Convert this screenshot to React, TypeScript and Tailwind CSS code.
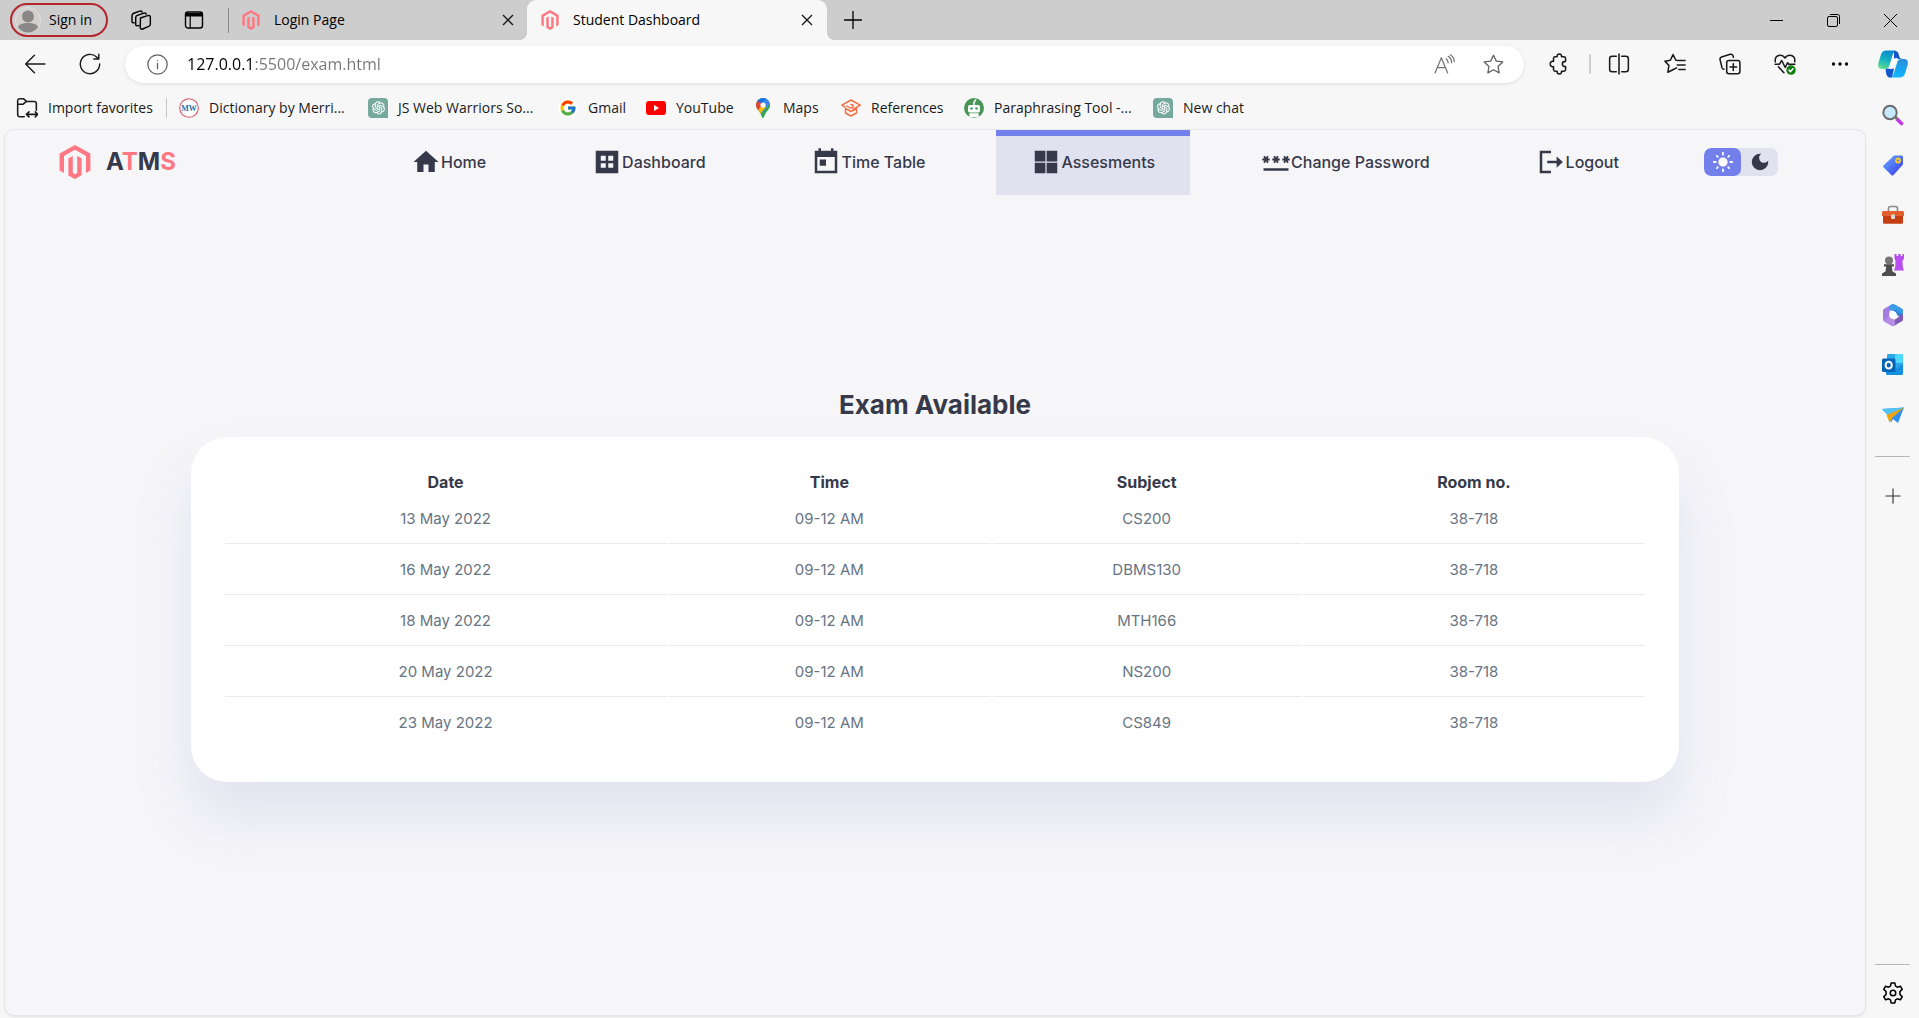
import { useState, type ReactNode } from "react";
import { FcGoogle } from "react-icons/fc";
import { AiOutlineOpenAI } from "react-icons/ai";
import { MdLightMode, MdDarkMode } from "react-icons/md";

function Stroke({ children, className = "size-5", width = 1.4 }: { children: ReactNode; className?: string; width?: number }) {
  return (
    <svg viewBox="0 0 20 20" fill="none" stroke="currentColor" strokeWidth={width} strokeLinecap="round" strokeLinejoin="round" className={`shrink-0 ${className}`} aria-hidden="true">
      {children}
    </svg>
  );
}

function Magento({ className }: { className: string }) {
  return (
    <svg viewBox="1.2 0 21.6 24" fill="#ff7782" className={`shrink-0 ${className}`} preserveAspectRatio="none" aria-hidden="true">
      <path d="M12 0 1.608 6v12l2.97 1.715-.013-12L11.99 3.43l7.42 4.285v12L22.39 18V6zM13.484 19.714 12 20.577l-1.49-.855V7.72L7.54 9.436l.005 12.01L12 24l4.456-2.574V9.43l-2.972-1.716z" />
    </svg>
  );
}

function Close() {
  return (
    <svg viewBox="0 0 12 12" stroke="#1a1a1a" strokeWidth="1.4" className="size-3" aria-hidden="true">
      <path d="M1 1l10 10M11 1L1 11" />
    </svg>
  );
}

const starPath = "M10 1.2l2.7 5.6 6.1.8-4.5 4.3 1.1 6.1L10 15l-5.4 3 1.1-6.1L1.2 7.6l6.1-.8z";

function TabStrip() {
  return (
    <div className="flex h-10 items-center bg-[#cdcdcd] text-sm text-black">
      <button className="ml-[10px] flex h-[34px] w-[98px] items-center gap-2 rounded-full border-2 border-[#b3262e] pl-[3px]">
        <svg viewBox="0 0 26 26" className="size-[26px]" aria-hidden="true">
          <circle cx="13" cy="13" r="12.5" fill="#d2d0ce" stroke="#e3e1df" />
          <circle cx="13" cy="9.6" r="6" fill="#8a8886" />
          <path d="M3 20c1-3 5-4 10-4s9 1 10 4c-2 3.500-6 5.500-10 5.500S5 23.500 3 20z" fill="#8a8886" />
        </svg>
        Sign in
      </button>
      <button aria-label="Workspaces" className="ml-[22px]">
        <Stroke className="size-[22px]" width={1.3}>
          <path d="M9.500 8.200l6.500-2.200c1.500-.5 2.500.2 2.500 1.600v6.200c0 1-.5 1.700-1.500 2l-5.500 2.400c-1.200.5-2.200-.2-2.200-1.400z" />
          <path d="M8 15l-1.200.3c-1 .2-1.600-.4-1.600-1.300V7.800c0-1 .5-1.700 1.500-2l6-2c1-.3 1.800 0 2 .9" />
          <path d="M3.800 12.500c-1.300.3-2-.2-2-1.300V6.300c0-1.200.5-2 1.600-2.400l5.400-2c1-.4 2 0 2.200.9" />
        </Stroke>
      </button>
      <button aria-label="Tab actions" className="ml-8">
        <Stroke className="size-5">
          <rect x="1.500" y="2" width="17" height="16" rx="2.500" />
          <path d="M2 3.500h16v2.500H2zM6.200 6v12" fill="currentColor" strokeWidth="1.200" />
        </Stroke>
      </button>
      <span className="ml-6 h-[25px] w-px bg-[#8a8a8a]" />
      <div className="flex w-[298px] items-center pl-[13px]">
        <Magento className="h-5 w-[18px]" />
        <span className="ml-3.5 flex-1">Login Page</span>
        <button aria-label="Close Login Page" className="mr-[13px]"><Close /></button>
      </div>
      <div className="relative flex h-10 w-[300px] items-center rounded-t-[9px] bg-[#f7f7f7] pl-3.5">
        <span className="absolute bottom-0 -left-2 size-2 bg-[radial-gradient(circle_at_0_0,#cdcdcd_8px,#f7f7f7_8px)]" />
        <span className="absolute -right-2 bottom-0 size-2 bg-[radial-gradient(circle_at_100%_0,#cdcdcd_8px,#f7f7f7_8px)]" />
        <Magento className="h-5 w-[18px]" />
        <span className="ml-3.5 flex-1">Student Dashboard</span>
        <button aria-label="Close Student Dashboard" className="mr-[14px]"><Close /></button>
      </div>
      <button aria-label="New tab" className="ml-4">
        <Stroke className="size-5" width={1.3}><path d="M10 1.500v17M1.500 10h17" /></Stroke>
      </button>
      <div className="ml-auto flex items-center gap-11 pr-[22px]">
        <button aria-label="Minimize">
          <svg viewBox="0 0 13 13" className="size-[13px]" stroke="#000"><path d="M0 6.500h13" /></svg>
        </button>
        <button aria-label="Restore">
          <svg viewBox="0 0 13 13" className="size-[13px]" stroke="#000" fill="none">
            <rect x=".5" y="2.500" width="10" height="10" rx="1.500" />
            <path d="M3 .5h7.500a2 2 0 0 1 2 2V10" />
          </svg>
        </button>
        <button aria-label="Close window">
          <svg viewBox="0 0 13 13" className="size-[13px]" stroke="#000"><path d="M0 0l13 13M13 0L0 13" /></svg>
        </button>
      </div>
    </div>
  );
}

function Copilot() {
  return (
    <svg viewBox="0 0 30 28" className="h-7 w-[30px]" aria-hidden="true">
      <defs>
        <linearGradient id="cpa" x1=".6" y1="0" x2=".3" y2="1"><stop offset="0" stopColor="#0b86cf" /><stop offset=".55" stopColor="#18b5c0" /><stop offset="1" stopColor="#62dd8e" /></linearGradient>
        <linearGradient id="cpb" x1=".6" y1="0" x2=".3" y2="1"><stop offset="0" stopColor="#2a8fd8" /><stop offset=".5" stopColor="#16a5f0" /><stop offset="1" stopColor="#17b9fb" /></linearGradient>
      </defs>
      <path d="M16 1c4 0 4.500 2 5 4.500.4 2.500 1.500 3.500 4 3.500h-9zM7.500 18.500H16l-2 9h-1.500c-3 0-4-2-4.500-5-.2-1.500-.5-2.500-.5-4z" fill="#1457cc" />
      <path d="M8.500.5h9.500c-2.300 1-3 3-4 6.500l-2.500 8c-1 3.300-2 4-5 4H4c-3.500 0-4.500-2.600-3.600-6L3 4.500C3.800 2 5.500.5 8.500.5z" fill="url(#cpa)" />
      <path d="M21.500 27.500h-9c2.300-1 3-3 4-6.500l2.500-8c1-3.300 2-4 5-4h2c3.500 0 4.500 2.600 3.600 6L27 23.500c-.8 2.500-2.500 4-5.500 4z" fill="url(#cpb)" />
      <path d="M18.500 8c-2.500 0-3.500 1-4.200 3.200L13 15.500c-.8 2.500-1.800 3.500-3.500 3.500h2.500c2.500 0 3.600-1 4.300-3.200l1.200-3.800c.7-2.300 1.300-3.400 3-4z" fill="#fff" />
    </svg>
  );
}

function Toolbar() {
  return (
    <div className="flex h-12 items-center text-[#1a1a1a]">
      <button aria-label="Back" className="ml-6">
        <Stroke className="size-[22px]" width={1.3}><path d="M19 10H1.500M9.500 2l-8 8 8 8" /></Stroke>
      </button>
      <button aria-label="Refresh" className="ml-[33px]">
        <Stroke className="size-[22px]" width={1.3}><path d="M18.800 10a8.800 8.800 0 1 1-2.800-6.400l1.500 1.500M18 1v4.500h-4.500" /></Stroke>
      </button>
      <div className="ml-6 flex h-[37px] flex-1 items-center rounded-full bg-white pl-[22px] shadow-[0_1px_4px_rgba(0,0,0,0.1)]">
        <button aria-label="Site information" className="text-[#606060]">
          <Stroke className="size-[21px]" width={1.2}><circle cx="10" cy="10" r="9.200" /><path d="M10 9v5M10 6.200v.1" /></Stroke>
        </button>
        <input
          aria-label="Address"
          defaultValue="127.0.0.1:5500/exam.html"
          className="ml-[19px] min-w-0 flex-1 bg-[linear-gradient(90deg,#000_67px,#767676_67px)] bg-clip-text text-base text-transparent caret-black outline-none"
        />
        <button aria-label="Read aloud" className="text-[#767676]">
          <Stroke className="size-[21px]" width={1.2}><path d="M1 18L7 3.500l6 14.500M3 13h8M11.500 4.500c1.500 1 2 2.500 1.900 4M13.500 2.200c2.500 1.600 3.400 3.700 3.200 6M15.500.8c2.700 1.800 3.800 3.800 3.800 6.400" /></Stroke>
        </button>
        <button aria-label="Add to favorites" className="mr-5 ml-7 text-[#606060]">
          <Stroke className="size-[21px]" width={1.2}><path d={starPath} /></Stroke>
        </button>
      </div>
      <div className="ml-6 flex items-center">
        <button aria-label="Extensions">
          <Stroke className="size-[22px]"><path d="M6.500 3.500h1.800c-.3-1.500.6-2.500 2-2.500s2.300 1 2 2.500h2.200c1 0 1.500.5 1.500 1.500v2.600c-2 0-3 1-3 2.400s1 2.400 3 2.400V15c0 1-.5 1.500-1.500 1.500h-2.200c.3 1.500-.6 2.500-2 2.500s-2.300-1-2-2.500H6.500c-1 0-1.500-.5-1.500-1.500v-2.600c-2 .4-3-.8-3-2.400s1-2.800 3-2.400V5c0-1 .5-1.500 1.500-1.500z" /></Stroke>
        </button>
        <span className="ml-[19px] h-5 w-[2px] bg-[#d0d0d0]" />
        <button aria-label="Split screen" className="ml-[17px]">
          <Stroke className="size-[22px]"><path d="M7.500 3H3.700C2.500 3 1.500 4 1.500 5.200v9.600C1.500 16 2.500 17 3.700 17h3.800M12.500 3h3.800c1.200 0 2.200 1 2.200 2.200v9.600c0 1.200-1 2.200-2.200 2.200h-3.800M10 1v18" /></Stroke>
        </button>
        <button aria-label="Favorites" className="ml-[34px]">
          <Stroke className="size-[22px]"><path d="M13 6.800l-2.200-.2L8.200 1.500 5.800 6.600.8 7.400l3.700 3.900-1 6.200 5-2.500M13 6.800h6.200M12 11h7.200M13.500 15h5.700M8.500 15l3-1.500" /></Stroke>
        </button>
        <button aria-label="Collections" className="ml-[33px]">
          <Stroke className="size-[22px]"><rect x="7" y="6.800" width="12" height="12" rx="2" /><path d="M13 9.800v6M10 12.800h6M4.500 14.800c-1 0-1.500-.6-1.800-1.500L1 6.200C.7 5 1.200 4 2.400 3.600l7.800-2.400c1.200-.3 2.200.3 2.500 1.300l.4 1.300" /></Stroke>
        </button>
        <button aria-label="Browser essentials" className="ml-[33px]">
          <Stroke className="size-[22px]">
            <path d="M1.200 8C.6 4.500 2.500 2 5.500 2 7.500 2 9 3 10 4.500 11 3 12.500 2 14.500 2c3 0 4.900 2.500 4.300 6M1 10.200h4l2-3.400 3.200 6.400 2.200-4.400 1 1.400H19M4 12.500l5 5.500" />
            <circle cx="15.500" cy="15.500" r="4.300" fill="#107c10" stroke="none" />
            <path d="M13.700 15.600l1.300 1.300 2.300-2.600" stroke="#fff" />
          </Stroke>
        </button>
        <button aria-label="Settings and more" className="ml-[34px]">
          <svg viewBox="0 0 20 20" className="size-5" aria-hidden="true"><circle cx="3.500" cy="10" r="1.700" /><circle cx="10" cy="10" r="1.700" /><circle cx="16.500" cy="10" r="1.700" /></svg>
        </button>
        <button aria-label="Copilot" className="mr-[11px] ml-7"><Copilot /></button>
      </div>
    </div>
  );
}

function GptMark() {
  return (
    <span className="flex size-5 items-center justify-center rounded-[4px] rounded-br-none bg-[#75a99c]">
      <AiOutlineOpenAI className="size-[17px] text-white" />
    </span>
  );
}

const bookmarks: { label: string; width: string; icon: ReactNode }[] = [
  {
    label: "Dictionary by Merri...",
    width: "w-[189px]",
    icon: (
      <svg viewBox="0 0 20 20" className="size-5" aria-hidden="true">
        <circle cx="10" cy="10" r="9.300" fill="#fff" stroke="#e0575f" strokeWidth="1.100" />
        <text x="10" y="12.800" textAnchor="middle" fontSize="8" fontWeight="700" fill="#2f6ea5" fontFamily="Liberation Serif">MW</text>
      </svg>
    ),
  },
  { label: "JS Web Warriors So...", width: "w-[190px]", icon: <GptMark /> },
  {
    label: "Gmail",
    width: "w-[88px]",
    icon: <span className="flex size-5 items-center justify-center rounded-full bg-white"><FcGoogle className="size-[18px]" /></span>,
  },
  {
    label: "YouTube",
    width: "w-[107px]",
    icon: (
      <svg viewBox="0 0 20 20" className="size-5" aria-hidden="true"><rect y="3" width="20" height="14" rx="3" fill="red" /><path d="M8 7l5 3-5 3z" fill="#fff" /></svg>
    ),
  },
  {
    label: "Maps",
    width: "w-[88px]",
    icon: (
      <svg viewBox="0 0 20 20" className="size-5" aria-hidden="true">
        <defs><clipPath id="pin"><path d="M10 0a7 7 0 0 1 7 7c0 4.500-4.500 6-6.200 12.300-.3.9-1.300.9-1.600 0C7.500 13 3 11.500 3 7a7 7 0 0 1 7-7z" /></clipPath></defs>
        <g clipPath="url(#pin)">
          <path d="M0 0h20v20H0z" fill="#34a853" />
          <path d="M3 13.500L14 0h6v5.500L8 19z" fill="#4285f4" />
          <path d="M2 14L10 4l3 5-7 8z" fill="#fbbc04" />
          <path d="M2 10V2l3 0 5 4.500-6.500 7z" fill="#ea4335" />
          <path d="M4.500 0H14l-5 6-5-3.800z" fill="#1a73e8" />
          <path d="M17.500 4.500L7.500 16.500 10 20l8-8z" fill="#34a853" />
        </g>
        <circle cx="10" cy="7" r="2.600" fill="#fff" />
      </svg>
    ),
  },
  {
    label: "References",
    width: "w-[123px]",
    icon: (
      <svg viewBox="0 0 20 20" className="size-5" fill="none" stroke="#f36f45" strokeWidth="1.500" strokeLinejoin="round" strokeLinecap="round" aria-hidden="true">
        <path d="M4 9L.8 7.200 10 2l9.200 5.200L12 11.300M10 6.500c3 0 3 4-1 3.500L6 8M4.500 11v4L10 18l5.500-3v-4.500L10 13.500 4.500 10.500" />
      </svg>
    ),
  },
  {
    label: "Paraphrasing Tool -...",
    width: "w-[189px]",
    icon: (
      <svg viewBox="0 0 20 20" className="size-5" aria-hidden="true">
        <circle cx="10" cy="10" r="10" fill="#499557" />
        <rect x="4" y="7" width="12" height="7.500" rx="1.800" fill="#fff" />
        <path d="M10 7V4l2-2.500M6 16h8v2.500H6z" stroke="#fff" strokeWidth="1.300" fill="#fff" />
        <circle cx="7.500" cy="10.500" r="1.200" fill="#499557" /><circle cx="12.500" cy="10.500" r="1.200" fill="#499557" />
      </svg>
    ),
  },
  { label: "New chat", width: "w-[120px]", icon: <GptMark /> },
];

function Bookmarks() {
  return (
    <div className="flex h-[41px] items-center pb-0.5 text-sm whitespace-nowrap text-[#1a1a1a]">
      <button className="ml-4 flex w-[150px] items-center gap-2.5">
        <Stroke className="size-[22px]" width={1.4}>
          <path d="M7.500 18H3.500c-1.200 0-2-.8-2-2V3.500c0-1.200.8-2 2-2h3.200L9.500 4h7c1.200 0 2 .8 2 2v6M1.500 6.500h5L9.500 4M10 15.800h9.500M11.800 13.500l-2.300 2.300 2.300 2.300M17.500 13.500l2.300 2.300-2.300 2.300" />
        </Stroke>
        Import favorites
      </button>
      <span className="mr-3 h-5 w-px bg-[#c8c8c8]" />
      {bookmarks.map((b) => (
        <a key={b.label} href="#" className={`flex shrink-0 items-center gap-2.5 ${b.width}`}>
          {b.icon}
          {b.label}
        </a>
      ))}
    </div>
  );
}

const navItems = [
  { label: "Home", path: "M10 20v-6h4v6h5v-8h3L12 3 2 12h3v8z" },
  { label: "Dashboard", path: "M3 3v18h18V3H3zm8 13.500H7V13h4zm0-5.500H7V7h4zm6 5.500h-4V13h4zm0-5.500h-4V7h4z" },
  { label: "Time Table", path: "M21 3h-3V1h-2v2H8V1H6v2H3v18h18zm-2 16H5V8h14zM7 10h5v5H7z" },
  { label: "Assesments", path: "M3 3v8.500h8.500V3H3zm0 18h8.500v-8.500H3zM12.500 3v8.500H21V3zm0 18H21v-8.500h-8.500z" },
  {
    label: "Change Password",
    path: "M2 17h20v2H2zm1.150-4.050L4 11.470l.85 1.480 1.300-.75-.85-1.480H7v-1.500H5.300l.85-1.470L4.850 7 4 8.470 3.150 7l-1.300.75.85 1.470H1v1.500h1.700l-.85 1.480zm6.700-.75l1.300.75.850-1.480.85 1.480 1.300-.75-.85-1.480H15v-1.500h-1.700l.85-1.470-1.300-.75L12 8.470 11.150 7l-1.300.75.85 1.470H9v1.500h1.700zM23 9.220h-1.700l.85-1.470-1.300-.75L20 8.470 19.150 7l-1.300.75.85 1.470H17v1.500h1.700l-.85 1.480 1.300.75.85-1.480.85 1.480 1.300-.75-.85-1.480H23z",
  },
  { label: "Logout", path: "M3 3h9v2H5v14h7v2H3zm13.500 4.500L21.500 12l-5 4.500V13H9v-2h7.500z" },
];

function ThemeToggle() {
  const [dark, setDark] = useState(false);
  return (
    <button
      aria-label="Toggle theme"
      aria-pressed={dark}
      onClick={() => setDark(!dark)}
      className="mb-0.5 flex h-7 w-[74px] shrink-0 overflow-hidden rounded-[7px] bg-[#e1e2f0] text-[#363949]"
    >
      <span className={`flex flex-1 items-center justify-center rounded-[7px] ${dark ? "" : "bg-[#7380ec] text-white"}`}>
        <MdLightMode className="size-[22px]" />
      </span>
      <span className={`flex flex-1 items-center justify-center rounded-[7px] ${dark ? "bg-[#7380ec] text-white" : ""}`}>
        <MdDarkMode className="size-[22px]" />
      </span>
    </button>
  );
}

function Header() {
  return (
    <header className="flex h-[65px] items-center pr-[87px] pl-[54px]">
      <a href="#" className="flex w-[317px] shrink-0 items-center gap-[15px] pb-0.5">
        <Magento className="h-[34px] w-8" />
        <h2 className="text-2xl font-bold">
          A<span className="text-[#ff7782]">T</span>M<span className="text-[#ff7782]">S</span>
        </h2>
      </a>
      <nav className="mr-[50px] flex h-full flex-1 items-stretch justify-between">
        {navItems.map((item) => {
          const active = item.label === "Assesments";
          return (
            <a
              key={item.label}
              href="#"
              className={`flex items-center px-[35px] pb-0.5 text-base font-medium whitespace-nowrap ${active ? "relative bg-[#e1e2f0]" : ""}`}
            >
              {active && <span className="absolute inset-x-0 top-0 h-1.5 bg-[#7380ec]" />}
              <svg viewBox="0 0 24 24" fill="currentColor" fillRule="evenodd" className="size-[30px] shrink-0" aria-hidden="true">
                <path d={item.path} />
              </svg>
              {item.label}
            </a>
          );
        })}
      </nav>
      <ThemeToggle />
    </header>
  );
}

const exams = [
  ["13 May 2022", "09-12 AM", "CS200", "38-718"],
  ["16 May 2022", "09-12 AM", "DBMS130", "38-718"],
  ["18 May 2022", "09-12 AM", "MTH166", "38-718"],
  ["20 May 2022", "09-12 AM", "NS200", "38-718"],
  ["23 May 2022", "09-12 AM", "CS849", "38-718"],
];

function ExamPage() {
  return (
    <div className="ml-1 flex flex-1 flex-col rounded-[10px] border border-[#e6e6e9] bg-[#f6f6f9] font-['Inter',sans-serif] text-[#363949] shadow-[0_1px_2px_rgba(0,0,0,0.08)]">
      <Header />
      <main className="flex flex-col items-center pt-[190px] pb-10">
        <h2 className="mb-3 text-[26px] leading-[40px] font-bold">Exam Available</h2>
        <div className="w-4/5 rounded-[36px] bg-white p-8 shadow-[0_36px_54px_rgba(132,139,200,0.18)]">
          <table className="w-full table-fixed border-separate border-spacing-[2px] text-center">
            <colgroup>
              <col className="w-[31.2%]" />
              <col className="w-[22.8%]" />
              <col className="w-[21.8%]" />
              <col className="w-[24.2%]" />
            </colgroup>
            <thead>
              <tr className="h-[22px] text-base leading-[22px]">
                {["Date", "Time", "Subject", "Room no."].map((h) => <th key={h} scope="col" className="font-bold">{h}</th>)}
              </tr>
            </thead>
            <tbody className="text-[15px] text-[#677483]">
              {exams.map((row, i) => (
                <tr key={row[0]}>
                  {row.map((cell, j) => (
                    <td key={j} className={`h-[49px] border-b ${i === exams.length - 1 ? "border-transparent" : "border-[#e8e9f3]"}`}>{cell}</td>
                  ))}
                </tr>
              ))}
            </tbody>
          </table>
        </div>
      </main>
    </div>
  );
}

const sideApps: { label: string; icon: ReactNode }[] = [
  {
    label: "Search",
    icon: <><path d="M15.500 15.500l4 4" stroke="#c239e8" strokeWidth="3.800" strokeLinecap="round" /><path d="M13 12.500l2.500 2.500" stroke="#777" strokeWidth="2.500" /><circle cx="8" cy="8.500" r="6.700" fill="#c5e8fb" stroke="#6b6b6b" strokeWidth="2" /></>,
  },
  {
    label: "Shopping",
    icon: <><path d="M12 1.500h7.500c.8 0 1.500.7 1.500 1.500v7.500L11.500 21c-.7.700-1.500.7-2.200 0l-7.600-7.600c-.7-.7-.7-1.500 0-2.200z" fill="url(#tag)" /><circle cx="16" cy="6.500" r="2" fill="#5a7bf5" stroke="#fbcb1f" strokeWidth="1.800" /></>,
  },
  {
    label: "Tools",
    icon: <><path d="M6.500 7V4.500C6.500 3.200 7.200 2.500 8.500 2.500h5c1.300 0 2 .7 2 2V7" fill="none" stroke="#8b8b8b" strokeWidth="1.700" /><path d="M1.500 7h19c1 0 1.500.6 1.500 1.500V12H0V8.500C0 7.600.5 7 1.500 7z" fill="#e4602c" /><path d="M1 12h20v6.500c0 .8-.4 1.200-1.200 1.200H2.200c-.8 0-1.200-.4-1.200-1.200z" fill="#c43e12" /><rect x="9" y="10.500" width="4" height="4.500" rx="1" fill="#dcdcdc" /></>,
  },
  {
    label: "Games",
    icon: <><path d="M12.500 0h2v2h1.800V0h2.400v2h1.800V0H22v5l-1.500 1.500.3 6.500 1.200 3.500H12l1.200-3.500.3-6.500L12.500 5z" fill="#b84df0" /><circle cx="7" cy="6.500" r="4" fill="#777" /><path d="M2 10.200h10v2.300H9.800l.7 5 3.500 2V22H0v-2.500l3.500-2 .7-5H2z" fill="#4e4e4e" /></>,
  },
  {
    label: "Microsoft 365",
    icon: <><path d="M9 .8c1.300-.8 2.700-.8 4 0l6.500 3.800c1 .6 1.500 1.400 1.500 2.600V15l-6-4-4-4.500L5 5z" fill="#2f86d8" /><path d="M21 8v7.200c0 1-.5 1.800-1.500 2.400L13 21.300c-1.300.8-2.700.8-4 0L3 17.700 7 13.500l4 3 4.500-2.500z" fill="#8059b8" /><path d="M13 21.300c-1.300.8-2.700.8-4 0l-6.500-3.800C1.500 16.900 1 16 1 15V7.200c0-1.200.5-2 1.500-2.600L9 .8 7.500 3v9z" fill="#a27fe0" /><path d="M1.500 17l6-4.500 5.500 4v4.800c-1.300.8-2.700.8-4 0z" fill="#b58ce6" /><path d="M9 .8L7.500 3v4L13 5.500l8 5V7.200c0-1.200-.5-2-1.500-2.600L13 .8c-1.300-.8-2.700-.8-4 0z" fill="#3a9be6" /><circle cx="11" cy="11" r="3.800" fill="#fff" /></>,
  },
  {
    label: "Outlook",
    icon: <><rect x="5" y="0" width="16" height="18" rx="1.200" fill="#28a8ea" /><path d="M13 0h7c.6 0 1 .4 1 1v8h-8z" fill="#50d9ff" /><path d="M4 10l9 6 8-6v9.500c0 .8-.5 1.500-1.500 1.500h-14C4.500 21 4 20.500 4 19.500z" fill="#1490df" /><rect x="0" y="4.500" width="13.500" height="13.500" rx="1.500" fill="#0364b8" /><ellipse cx="6.700" cy="11.200" rx="3.100" ry="3.400" fill="none" stroke="#fff" strokeWidth="2" /></>,
  },
  {
    label: "Drop",
    icon: <><path d="M0 5l22-1.500-6 15.500-5-4-2 3.500L6 11z" fill="#2f8ff0" /><path d="M0 5l22-1.500L6 11.500z" fill="#4fc3f7" /><path d="M22 3.500L4.500 11 7.500 18.500l3-5z" fill="#f0a30a" /></>,
  },
];

function Sidebar() {
  return (
    <aside className="flex w-[53px] shrink-0 flex-col items-center pt-4">
      <svg className="absolute size-0" aria-hidden="true"><defs><linearGradient id="tag" x1="0" y1="0" x2="1" y2="1"><stop stopColor="#6bb0ff" /><stop offset="1" stopColor="#3535f0" /></linearGradient></defs></svg>
      <div className="flex flex-col gap-7">
        {sideApps.map((app) => (
          <button key={app.label} aria-label={app.label} className="size-[22px]">
            <svg viewBox="0 0 22 22" className="size-[22px]" aria-hidden="true">{app.icon}</svg>
          </button>
        ))}
      </div>
      <span className="mt-[30px] h-px w-[35px] bg-[#b8b8b8]" />
      <button aria-label="Customize sidebar" className="mt-[31px] text-[#333]">
        <Stroke className="size-4" width={1.400}><path d="M10 1v18M1 10h18" /></Stroke>
      </button>
      <span className="mt-auto h-px w-[35px] bg-[#b8b8b8]" />
      <button aria-label="Settings" className="mt-[17px] mb-[14px] text-black">
        <Stroke className="size-[22px]" width={1.400}>
          <path d="M8.300 1h3.400l.6 2.700 1.700 1 2.700-.9 1.700 2.900-2.100 1.900v2.800l2.100 1.900-1.700 2.900-2.700-.9-1.700 1-.6 2.700H8.300l-.6-2.700-1.700-1-2.700.9-1.700-2.900 2.100-1.900V8.600L1.600 6.700l1.700-2.900 2.700.9 1.700-1z" />
          <circle cx="10" cy="10" r="2.500" />
        </Stroke>
      </button>
    </aside>
  );
}

export default function App() {
  return (
    <div className="flex min-h-screen flex-col bg-[#f7f7f7] font-['Open_Sans',sans-serif]">
      <TabStrip />
      <Toolbar />
      <div className="flex flex-1">
        <div className="flex min-w-0 flex-1 flex-col pb-[2px]">
          <Bookmarks />
          <ExamPage />
        </div>
        <Sidebar />
      </div>
    </div>
  );
}
